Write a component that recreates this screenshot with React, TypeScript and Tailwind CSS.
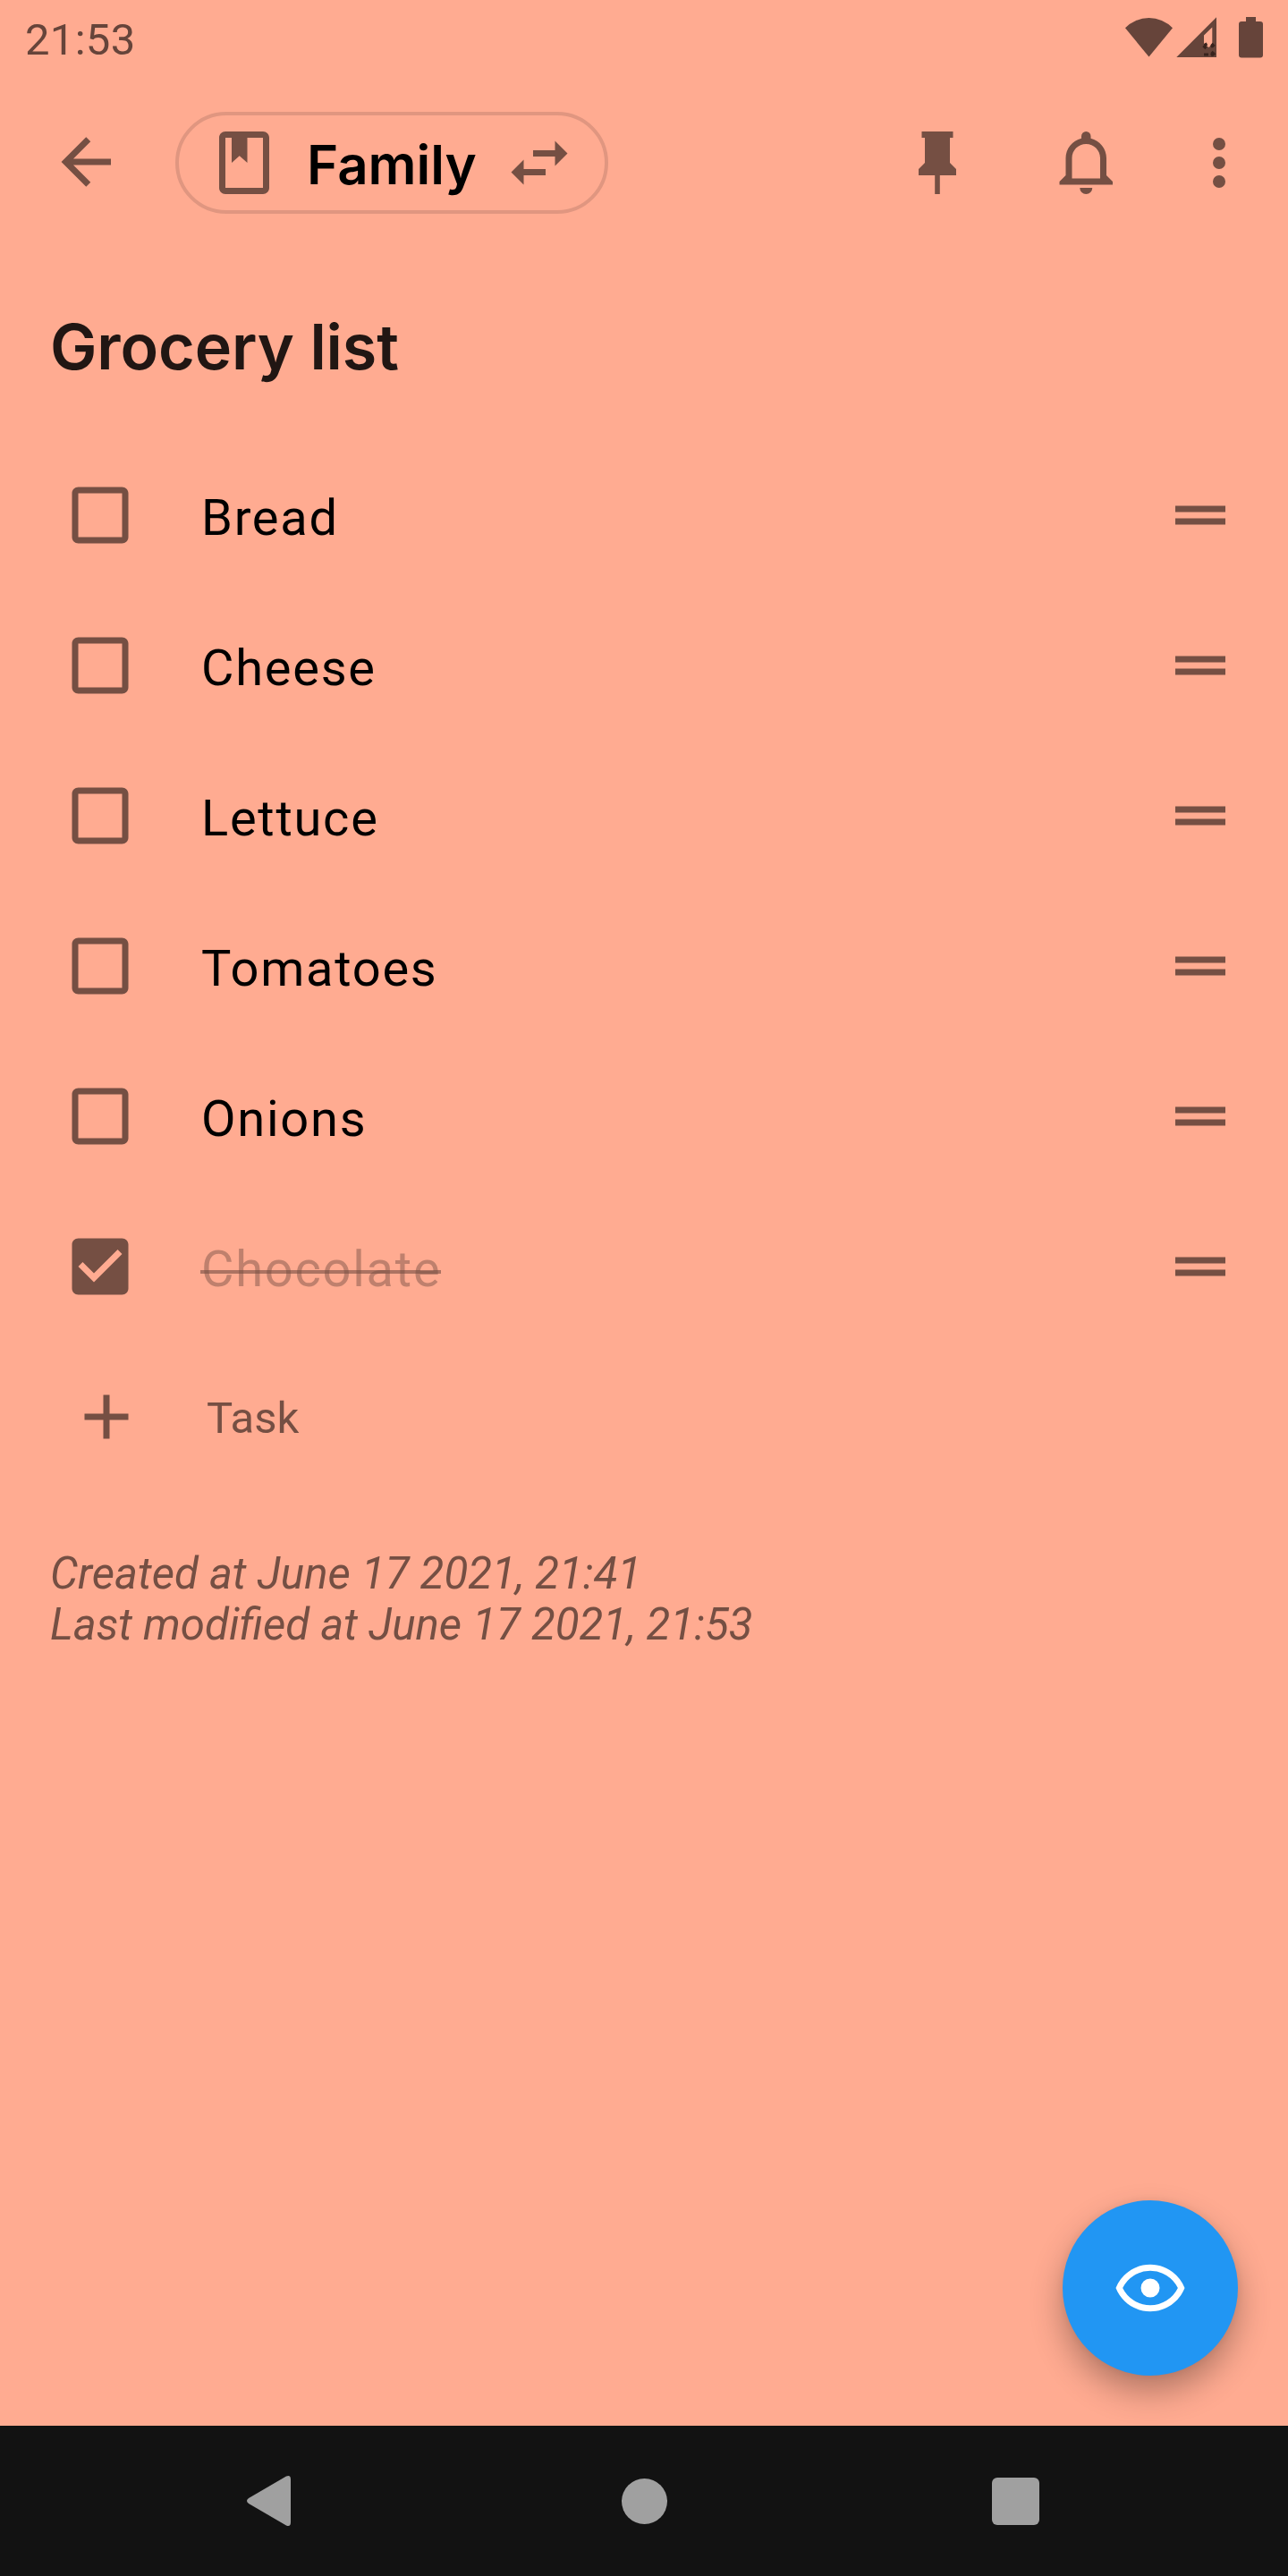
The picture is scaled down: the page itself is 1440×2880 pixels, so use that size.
import React from "react";

const TASKS = [
  { label: "Bread", done: false },
  { label: "Cheese", done: false },
  { label: "Lettuce", done: false },
  { label: "Tomatoes", done: false },
  { label: "Onions", done: false },
  { label: "Chocolate", done: true },
];

const ICONS = {
  back: "M20 11v2H8l5.5 5.5-1.42 1.42L4.16 12l7.92-7.92L13.5 5.5 8 11h12Z",
  notebook:
    "M18 2H6c-1.1 0-2 .9-2 2v16c0 1.1.9 2 2 2h12c1.1 0 2-.9 2-2V4c0-1.1-.9-2-2-2Zm0 18H6V4h2v8l2.5-2.25L13 12V4h5v16Z",
  swap: "M21 9l-4-4v3h-7v2h7v3M7 11l-4 4 4 4v-3h7v-2H7v-3Z",
  pin: "M16 12V4h1V2H7v2h1v8l-2 2v2h5.2v6h1.6v-6H18v-2l-2-2Z",
  bell: "M16 17H7V10.5C7 8 9 6 11.5 6C14 6 16 8 16 10.5M18 16V10.5C18 7.43 15.86 4.86 13 4.18V3.5A1.5 1.5 0 0 0 11.5 2A1.5 1.5 0 0 0 10 3.5V4.18C7.13 4.86 5 7.43 5 10.5V16L3 18V19H20V18M11.5 22A2 2 0 0 0 13.5 20H9.5A2 2 0 0 0 11.5 22Z",
  dots: "M12 16a2 2 0 1 1 0 4 2 2 0 0 1 0-4m0-6a2 2 0 1 1 0 4 2 2 0 0 1 0-4m0-6a2 2 0 1 1 0 4 2 2 0 0 1 0-4Z",
  unchecked:
    "M19 5v14H5V5h14m0-2H5c-1.1 0-2 .9-2 2v14c0 1.1.9 2 2 2h14c1.1 0 2-.9 2-2V5c0-1.1-.9-2-2-2Z",
  checked:
    "M19 3H5c-1.11 0-2 .9-2 2v14c0 1.1.89 2 2 2h14c1.11 0 2-.9 2-2V5c0-1.1-.89-2-2-2Zm-9 14l-5-5 1.41-1.41L10 14.17l7.59-7.59L19 8l-9 9Z",
  handle: "M20 9H4v2h16V9ZM4 15h16v-2H4v2Z",
  plus: "M19 13h-6v6h-2v-6H5v-2h6V5h2v6h6v2Z",
  eye: "M12 9a3 3 0 1 1 0 6 3 3 0 0 1 0-6m0-4.5c5 0 9.27 3.11 11 7.5-1.73 4.39-6 7.5-11 7.5S2.73 16.39 1 12c1.73-4.39 6-7.5 11-7.5M3.18 12a9.821 9.821 0 0 0 17.64 0 9.821 9.821 0 0 0-17.64 0Z",
};

function Icon({ name, className = "" }: { name: keyof typeof ICONS; className?: string }) {
  return (
    <svg viewBox="0 0 24 24" fill="currentColor" className={`size-[84px] shrink-0 ${className}`}>
      <path d={ICONS[name]} />
    </svg>
  );
}

function StatusBar() {
  return (
    <div className="flex h-[84px] items-start justify-between pl-[28px] text-[#66443a]">
      <span className="mt-[15px] text-[49px] leading-[60px] tracking-[0.3px]">21:53</span>
      <svg viewBox="1250 0 190 84" className="h-[84px] w-[190px]" fill="currentColor">
        <path d="M1258 31.300A37 37 0 0 1 1311 31.300L1284.500 63.500Z" />
        <path
          fillRule="evenodd"
          d="M1315.300 64L1360 19.300V64ZM1346 39.500V49l5.500 4L1355.300 49V30.500Z"
        />
        <path
          d="M1346.500 50.500l3-1.500M1354.500 49l3 3M1357.500 50l-3.500 2.500M1345.500 51l3 3M1346 61h5M1354.500 58l3.500 3.500M1358 59l-4 3"
          stroke="#38231d"
          strokeWidth="3.200"
        />
        <path d="M1393 19h11v5h5q3 0 3 3v34.500q0 3-3 3h-21q-3 0-3-3V27q0-3 3-3h5Z" />
      </svg>
    </div>
  );
}

function Toolbar() {
  return (
    <header className="flex h-[196px] items-center text-[#754f43]">
      <Icon name="back" className="mb-[3px] ml-[54px]" />
      <button className="ml-[58px] flex h-[114px] w-[484px] items-center rounded-full border-4 border-[#e09680] pl-[31px]">
        <Icon name="notebook" />
        <span className="mt-[3px] ml-[28px] w-[190px] text-left font-[Inter] text-[60px] leading-none font-semibold text-black">
          Family
        </span>
        <Icon name="swap" className="ml-[28px]" />
      </button>
      <Icon name="pin" className="ml-[326px]" />
      <Icon name="bell" className="ml-[84px]" />
      <Icon name="dots" className="ml-[63px]" />
    </header>
  );
}

function TaskRow({ label, done }: { label: string; done: boolean }) {
  return (
    <li className="flex h-[168px] items-center pr-[56px] pl-[70px] text-[#754f43]">
      <Icon name={done ? "checked" : "unchecked"} />
      <div className="ml-[70px] flex flex-1 pt-[6px]">
        <span
          className={
            done
              ? "relative pl-[1px] text-[56px] leading-[66px] tracking-[1.75px] text-[#bf806d]"
              : "relative pl-[1px] text-[56px] leading-[66px] tracking-[1.75px] text-black"
          }
        >
          {label}
          {done && <i className="absolute top-[34px] left-0 h-[4px] w-full bg-[#754f43]/60" />}
        </span>
      </div>
      <Icon name="handle" />
    </li>
  );
}

export default function App() {
  return (
    <div className="flex h-[2880px] w-[1440px] flex-col overflow-hidden bg-[#ffab91] font-[Roboto,sans-serif]">
      <StatusBar />
      <Toolbar />
      <h1 className="mt-[64px] ml-[56px] font-[Inter] text-[70px] leading-[88px] font-semibold tracking-[-0.1px] text-[#211613]">
        Grocery list
      </h1>
      <ul className="mt-[60px]">
        {TASKS.map((t) => (
          <TaskRow key={t.label} {...t} />
        ))}
      </ul>
      <div className="flex h-[168px] items-center pl-[77px] text-[#754f43]">
        <Icon name="plus" />
        <span className="ml-[70px] pt-[4px] text-[49px] leading-[58px]">Task</span>
      </div>
      <div className="mt-[63px] ml-[56px] text-[49.200px] leading-[57px] text-[#754f43] italic">
        <p>Created at June 17 2021, 21:41</p>
        <p>Last modified at June 17 2021, 21:53</p>
      </div>
      <div className="mt-auto mr-[56px] mb-[56px] flex size-[196px] items-center justify-center self-end rounded-full bg-[#2196f3] text-white shadow-[0_18px_36px_rgba(0,0,0,0.3),0_0_10px_rgba(0,0,0,0.06)]">
        <Icon name="eye" />
      </div>
      <nav className="flex h-[168px] shrink-0 items-center bg-[#121212] text-[#a0a0a0]">
        <svg viewBox="270 2766 60 60" className="ml-[270px] size-[60px]" fill="currentColor">
          <path d="M320 2768.500Q325 2766.500 325 2772V2820Q325 2825.500 320 2823.500L278 2799Q274 2796 278 2793Z" />
        </svg>
        <div className="ml-[364.500px] size-[51px] rounded-full bg-current" />
        <div className="ml-[363px] size-[53px] rounded-[6px] bg-current" />
      </nav>
    </div>
  );
}
